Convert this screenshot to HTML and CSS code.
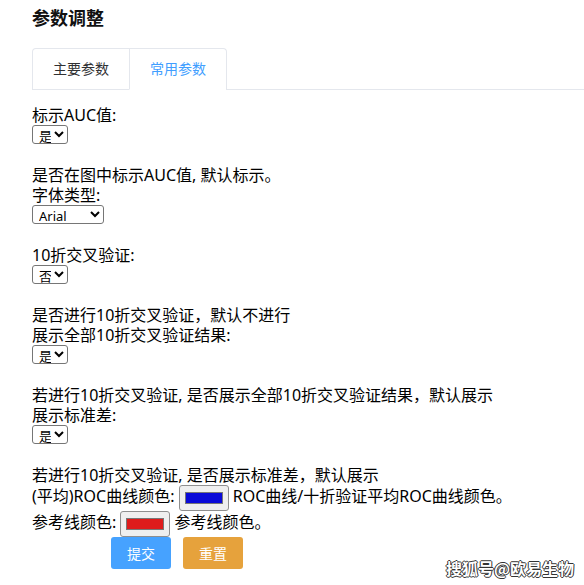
FILE: index.html
```html
<!DOCTYPE html>
<html lang="zh-CN">
<head>
    <meta charset="UTF-8">
    <meta name="viewport" content="width=device-width, initial-scale=1.0">
    <title>参数调整</title>
    <link rel="stylesheet" href="styles.css">
</head>
<body>
<div class="page">
    <h3 class="title">参数调整</h3>

    <div class="tabs">
        <div class="tab-nav">
            <div class="tab">主要参数</div>
            <div class="tab active">常用参数</div>
        </div>
    </div>

    <form class="params">
        标示AUC值:<br>
        <select class="sel-yn"><option>是</option><option>否</option></select><br><br>
        是否在图中标示AUC值, 默认标示。<br>
        字体类型:<br>
        <select class="sel-font"><option>Arial</option><option>Times</option></select><br><br>
        10折交叉验证:<br>
        <select class="sel-yn"><option>否</option><option>是</option></select><br><br>
        是否进行10折交叉验证，默认不进行<br>
        展示全部10折交叉验证结果:<br>
        <select class="sel-yn"><option>是</option><option>否</option></select><br><br>
        若进行10折交叉验证, 是否展示全部10折交叉验证结果，默认展示<br>
        展示标准差:<br>
        <select class="sel-yn"><option>是</option><option>否</option></select><br><br>
        若进行10折交叉验证, 是否展示标准差，默认展示<br>
        (平均)ROC曲线颜色: <input type="color" value="#0a0ad8"> ROC曲线/十折验证平均ROC曲线颜色。<br>
        参考线颜色: <input type="color" value="#de1c1c"> 参考线颜色。<br>
        <div class="actions">
            <button type="button" class="btn btn-submit">提交</button>
            <button type="button" class="btn btn-reset">重置</button>
        </div>
    </form>
</div>
<div class="watermark">搜狐号@欧易生物</div>
</body>
</html>
```

FILE: styles.css
```css
body {
    margin: 0;
    font-family: "Noto Sans", "Noto Sans CJK SC", sans-serif;
    color: #000;
    background: #fff;
}
.page {
    padding-left: 32px;
}
.title {
    margin: 0;
    padding-top: 6px;
    font-size: 18px;
    line-height: 24px;
    font-weight: bold;
    color: #111;
}
.tabs {
    margin-top: 18px;
    border-bottom: 1px solid #e4e7ed;
}
.tab-nav {
    display: inline-flex;
    border: 1px solid #e4e7ed;
    border-bottom: none;
    border-radius: 4px 4px 0 0;
    margin-bottom: -1px;
}
.tab {
    height: 40px;
    line-height: 40px;
    padding: 0 20px;
    font-size: 14px;
    color: #303133;
    border-bottom: 1px solid transparent;
}
.tab + .tab {
    border-left: 1px solid #e4e7ed;
}
.tab.active {
    color: #409eff;
    border-bottom-color: #fff;
}
.params {
    margin-top: 15px;
    font-size: 16px;
    line-height: 20px;
}
select {
    font-family: "Noto Sans", "Noto Sans CJK SC", sans-serif;
    font-size: 13px;
    height: 19px;
    padding: 0 0 0 2px;
    border: 1px solid #767676;
    border-radius: 3px;
    background: #fff;
    color: #000;
    vertical-align: top;
}
.sel-yn {
    width: 36px;
}
.sel-font {
    width: 72px;
}
input[type="color"] {
    width: 50px;
    height: 26px;
    padding: 2px 3px;
    background: #efefef;
    border: 1px solid #8f8f8f;
    border-radius: 3px;
    vertical-align: middle;
}
.actions {
    padding-left: 79px;
    display: flex;
    gap: 12px;
}
.btn {
    width: 60px;
    height: 32px;
    border: none;
    border-radius: 3px;
    color: #fff;
    font-size: 14px;
    font-family: "Noto Sans CJK SC", sans-serif;
}
.btn-submit {
    background: #46a2ff;
}
.btn-reset {
    background: #e6a23c;
}
.watermark {
    position: absolute;
    left: 446px;
    top: 556px;
    font-size: 16px;
    font-weight: bold;
    color: #fff;
    font-family: "Noto Sans CJK SC", sans-serif;
    text-shadow: -1px 0 #333, 1px 0 #333, 0 -1px #333, 0 1px #333;
}
```
